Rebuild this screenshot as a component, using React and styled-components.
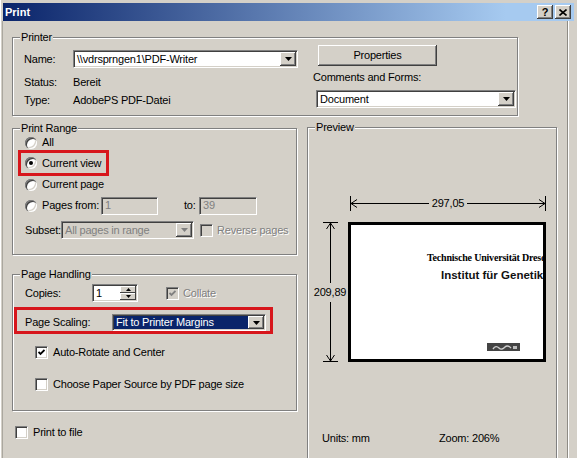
import React from 'react';
import styled, { createGlobalStyle } from 'styled-components';

const FACE = '#d4d0c8';

const GlobalStyle = createGlobalStyle`
  html, body { margin: 0; padding: 0; background: ${FACE}; }
  body {
    font-family: "Liberation Sans", Arial, sans-serif;
    font-size: 11px;
    color: #000;
  }
  * { box-sizing: border-box; }
`;

const Window = styled.div`
  width: 577px;
  height: 458px;
  overflow: hidden;
  background: ${FACE};
  display: flex;
  flex-direction: column;
  padding-top: 3px;
  letter-spacing: -0.2px;
  line-height: 13px;
  border-left: 1px solid #fff;
`;

const TitleBar = styled.div`
  height: 18px;
  margin: 0 3px 0 2px;
  flex: none;
  background: linear-gradient(to right, #0a246a 0%, #a6caf0 88%, #a6caf0 100%);
  display: flex;
  align-items: center;
  gap: 2px;
  padding: 0 3px 0 2px;
`;

const TitleText = styled.span`
  flex: 1;
  color: #fff;
  font-weight: bold;
  font-size: 11px;
  letter-spacing: 0;
`;

const TitleButton = styled.span`
  width: 16px;
  height: 14px;
  background: ${FACE};
  display: grid;
  place-items: center;
  box-shadow: inset -1px -1px 0 #404040, inset 1px 1px 0 #fff, inset -2px -2px 0 #808080;
  font-weight: bold;
  font-size: 11px;
  line-height: 12px;
  letter-spacing: 0;
`;

const Frame = styled.div`
  flex: 1;
  margin: 0 9px 0 1px;
  border-left: 1px solid #aaa79f;
  border-right: 1px solid #8e8b84;
  box-shadow: 1px 0 0 #fff;
  padding: 16px 0 0 9px;
  display: flex;
  flex-direction: column;
  min-height: 0;
`;

const Group = styled.div`
  position: relative;
  flex: none;
  border: 1px solid #808080;
  box-shadow: inset 1px 1px 0 #fff, 1px 1px 0 #fff;
  width: ${p => p.$w}px;
  height: ${p => p.$h}px;
  margin-top: ${p => p.$mt || 0}px;
`;

const Legend = styled.span`
  position: absolute;
  top: -7px;
  left: 7px;
  padding: 0 1px;
  background: ${FACE};
  line-height: 13px;
`;

/* ---------- generic controls ---------- */

const Sunken = styled.div`
  flex: none;
  display: flex;
  align-items: stretch;
  width: ${p => p.$w}px;
  height: ${p => p.$h || 18}px;
  padding: 1px;
  border-top: 1px solid #808080;
  border-left: 1px solid #808080;
  border-right: 1px solid #fff;
  border-bottom: 1px solid #fff;
  box-shadow: inset 1px 1px 0 #404040, inset -1px -1px 0 ${FACE};
  background: ${p => (p.$selected ? '#0a246a' : p.$disabled ? FACE : '#fff')};
`;

const FieldText = styled.span`
  flex: 1;
  display: flex;
  align-items: center;
  padding-left: 2px;
  white-space: nowrap;
  overflow: hidden;
  color: ${p => (p.$selected ? '#fff' : p.$disabled ? '#808080' : '#000')};
`;

const DropButton = styled.span`
  width: 16px;
  flex: none;
  background: ${FACE};
  display: grid;
  place-items: center;
  box-shadow: inset -1px -1px 0 #404040, inset 1px 1px 0 #fff, inset -2px -2px 0 #808080;
`;

const Arrow = ({ color = '#000' }) => (
  <svg width="7" height="4" viewBox="0 0 7 4">
    <polygon points="0,0 7,0 3.5,4" fill={color} />
  </svg>
);

const Combo = ({ w, h, value, selected, disabled }) => (
  <Sunken $w={w} $h={h} $selected={selected} $disabled={disabled}>
    <FieldText $selected={selected} $disabled={disabled}>{value}</FieldText>
    <DropButton>
      <Arrow color={disabled ? '#808080' : '#000'} />
    </DropButton>
  </Sunken>
);

const SpinStack = styled.span`
  width: 16px;
  flex: none;
  display: flex;
  flex-direction: column;
`;

const SpinButton = styled.span`
  flex: 1;
  background: ${FACE};
  display: grid;
  place-items: center;
  box-shadow: inset -1px -1px 0 #404040, inset 1px 1px 0 #fff;
`;

const Spinner = ({ value }) => (
  <Sunken $w={46} $h={18}>
    <FieldText>{value}</FieldText>
    <SpinStack>
      <SpinButton>
        <svg width="5" height="3" viewBox="0 0 5 3"><polygon points="2.5,0 5,3 0,3" fill="#000" /></svg>
      </SpinButton>
      <SpinButton>
        <svg width="5" height="3" viewBox="0 0 5 3"><polygon points="0,0 5,0 2.5,3" fill="#000" /></svg>
      </SpinButton>
    </SpinStack>
  </Sunken>
);

const PushButton = styled.div`
  width: 119px;
  height: 21px;
  margin-left: 5px;
  display: grid;
  place-items: center;
  background: ${FACE};
  box-shadow: inset -1px -1px 0 #404040, inset 1px 1px 0 #fff, inset -2px -2px 0 #808080;
`;

const CheckBox = styled.span`
  width: 13px;
  height: 13px;
  flex: none;
  display: grid;
  place-items: center;
  background: ${p => (p.$disabled ? FACE : '#fff')};
  border-top: 1px solid #808080;
  border-left: 1px solid #808080;
  border-right: 1px solid #fff;
  border-bottom: 1px solid #fff;
  box-shadow: inset 1px 1px 0 #404040, inset -1px -1px 0 ${FACE};
`;

const Check = ({ checked, disabled }) => (
  <CheckBox $disabled={disabled}>
    {checked && (
      <svg width="7" height="7" viewBox="0 0 7 7">
        <polyline points="0.5,3 2.5,5 6.5,1" fill="none" stroke={disabled ? '#808080' : '#000'} strokeWidth="1.8" />
      </svg>
    )}
  </CheckBox>
);

const RadioCircle = styled.span`
  width: 12px;
  height: 12px;
  flex: none;
  border-radius: 50%;
  background: #fff;
  display: grid;
  place-items: center;
  box-shadow: inset 1px 1px 0 #808080, inset 2px 2px 0 #404040, inset -1px -1px 0 #fff, inset -2px -2px 0 ${FACE};
`;

const RadioDot = styled.span`
  width: 4px;
  height: 4px;
  border-radius: 50%;
  background: #000;
`;

const Radio = ({ on }) => <RadioCircle>{on && <RadioDot />}</RadioCircle>;

const Muted = styled.span`
  color: #808080;
  text-shadow: 1px 1px 0 #fff;
  white-space: nowrap;
`;

/* ---------- printer section ---------- */

const PrinterBody = styled.div`
  display: flex;
  padding: 7px 0 0 11px;
`;

const PrinterInfo = styled.div`
  width: 289px;
  display: flex;
  flex-direction: column;
`;

const InfoRow = styled.div`
  display: flex;
  align-items: center;
  height: ${p => p.$h || 13}px;
  margin-top: ${p => p.$mt || 0}px;
`;

const InfoLabel = styled.span`
  width: 49px;
  flex: none;
`;

const PrinterSide = styled.div`
  display: flex;
  flex-direction: column;
`;

const SideLabel = styled.span`
  margin-top: 5px;
  white-space: nowrap;
`;

const ComboSlot = styled.div`
  margin: 6px 0 0 3px;
`;

/* ---------- lower columns ---------- */

const Columns = styled.div`
  display: flex;
  gap: 10px;
  margin-top: 11px;
`;

const LeftColumn = styled.div`
  width: 285px;
  flex: none;
  display: flex;
  flex-direction: column;
`;

const GroupBody = styled.div`
  display: flex;
  flex-direction: column;
  padding: ${p => p.$pt}px 0 0 12px;
`;

const OptionRow = styled.div`
  display: flex;
  align-items: center;
  gap: 5px;
  height: ${p => p.$h || 21}px;
  margin-top: ${p => p.$mt || 0}px;
  padding-left: ${p => p.$indent || 0}px;
  white-space: nowrap;
`;

const ViewHighlight = styled.div`
  width: 91px;
  margin: -3px 0 -2px -7px;
  padding-left: 4px;
  border: 3px solid #d7161c;
`;

const ScalingHighlight = styled.div`
  width: 259px;
  margin: 5px 0 0 -11px;
  padding: 4px 0 0 8px;
  border: 3px solid #d7161c;
`;

const FixedLabel = styled.span`
  width: ${p => p.$w}px;
  flex: none;
  margin-left: ${p => p.$ml || 0}px;
  white-space: nowrap;
`;

const TightRow = styled.div`
  display: flex;
  align-items: center;
  height: ${p => p.$h}px;
  margin-top: ${p => p.$mt || 0}px;
  white-space: nowrap;
`;

const SubsetCheck = styled.span`
  display: flex;
  align-items: center;
  gap: 4px;
  margin-left: ${p => p.$ml}px;
`;

const FileRow = styled.div`
  display: flex;
  align-items: center;
  gap: 5px;
  margin: 15px 0 0 3px;
  height: 13px;
`;

/* ---------- preview ---------- */

const PreviewBody = styled.div`
  display: flex;
  flex-direction: column;
  padding: 68px 0 0 6px;
`;

const HDim = styled.div`
  width: 196px;
  height: 15px;
  margin-left: 36px;
  display: flex;
  align-items: center;
`;

const HLine = styled.span`
  flex: 1;
  height: 1px;
  background: #000;
`;

const DimLabel = styled.span`
  padding: ${p => (p.$vertical ? '3px 0' : '0 3px')};
  white-space: nowrap;
  line-height: 13px;
`;

const PageRow = styled.div`
  display: flex;
  gap: 2px;
  margin-top: 11px;
`;

const VDim = styled.div`
  width: 32px;
  height: 140px;
  display: flex;
  flex-direction: column;
  align-items: center;
`;

const VLine = styled.span`
  flex: 1;
  width: 1px;
  background: #000;
`;

const Sheet = styled.div`
  width: 198px;
  height: 140px;
  border: 3px solid #000;
  background: #fff;
  overflow: hidden;
  display: flex;
  flex-direction: column;
  letter-spacing: 0;
`;

const Letterhead = styled.span`
  margin: 27px 0 0 76px;
  font-family: "Liberation Serif", "Times New Roman", serif;
  font-weight: bold;
  font-size: 10px;
  line-height: 12px;
  white-space: nowrap;
  letter-spacing: -0.2px;
`;

const Institute = styled.span`
  margin: 4px 0 0 90px;
  font-weight: bold;
  font-size: 11.5px;
  line-height: 14px;
  white-space: nowrap;
  color: #111;
`;

const LogoMark = styled.svg`
  margin: 61px 0 0 136px;
  flex: none;
`;

const PreviewFooter = styled.div`
  display: flex;
  margin-top: 70px;
  padding-left: 8px;
`;

const FooterItem = styled.span`
  width: 120px;
  white-space: nowrap;
`;

export default function App() {
  return (
    <>
      <GlobalStyle />
      <Window>
        <TitleBar>
          <TitleText>Print</TitleText>
          <TitleButton>?</TitleButton>
          <TitleButton>
            <svg width="8" height="7" viewBox="0 0 8 7">
              <path d="M0.5 0.5L7.5 6.5M7.5 0.5L0.5 6.5" stroke="#000" strokeWidth="1.6" />
            </svg>
          </TitleButton>
        </TitleBar>

        <Frame>
          <Group $w={506} $h={79}>
            <Legend>Printer</Legend>
            <PrinterBody>
              <PrinterInfo>
                <InfoRow $h={18} $mt={5}>
                  <InfoLabel>Name:</InfoLabel>
                  <Combo w={225} value={'\\\\vdrsprngen1\\PDF-Writer'} />
                </InfoRow>
                <InfoRow $mt={8}>
                  <InfoLabel>Status:</InfoLabel>
                  <span>Bereit</span>
                </InfoRow>
                <InfoRow $mt={5}>
                  <InfoLabel>Type:</InfoLabel>
                  <span>AdobePS PDF-Datei</span>
                </InfoRow>
              </PrinterInfo>
              <PrinterSide>
                <PushButton>Properties</PushButton>
                <SideLabel>Comments and Forms:</SideLabel>
                <ComboSlot>
                  <Combo w={200} value="Document" />
                </ComboSlot>
              </PrinterSide>
            </PrinterBody>
          </Group>

          <Columns>
            <LeftColumn>
              <Group $w={285} $h={127} $mt={1}>
                <Legend>Print Range</Legend>
                <GroupBody $pt={3}>
                  <OptionRow>
                    <Radio />
                    <span>All</span>
                  </OptionRow>
                  <ViewHighlight>
                    <OptionRow $h={20}>
                      <Radio on />
                      <span>Current view</span>
                    </OptionRow>
                  </ViewHighlight>
                  <OptionRow>
                    <Radio />
                    <span>Current page</span>
                  </OptionRow>
                  <TightRow $h={21}>
                    <Radio />
                    <FixedLabel $w={59} $ml={5}>Pages from:</FixedLabel>
                    <Sunken $w={57} $disabled>
                      <FieldText $disabled>1</FieldText>
                    </Sunken>
                    <FixedLabel $w={15} $ml={26}>to:</FixedLabel>
                    <Sunken $w={58} $disabled>
                      <FieldText $disabled>39</FieldText>
                    </Sunken>
                  </TightRow>
                  <TightRow $h={18} $mt={5}>
                    <FixedLabel $w={36}>Subset:</FixedLabel>
                    <Combo w={133} value="All pages in range" disabled />
                    <SubsetCheck $ml={6}>
                      <Check disabled />
                      <Muted>Reverse pages</Muted>
                    </SubsetCheck>
                  </TightRow>
                </GroupBody>
              </Group>

              <Group $w={285} $h={137} $mt={19}>
                <Legend>Page Handling</Legend>
                <GroupBody $pt={9}>
                  <TightRow $h={18}>
                    <FixedLabel $w={67}>Copies:</FixedLabel>
                    <Spinner value="1" />
                    <SubsetCheck $ml={28}>
                      <Check checked disabled />
                      <Muted>Collate</Muted>
                    </SubsetCheck>
                  </TightRow>
                  <ScalingHighlight>
                    <TightRow $h={17}>
                      <FixedLabel $w={87}>Page Scaling:</FixedLabel>
                      <Combo w={154} h={17} value="Fit to Printer Margins" selected />
                    </TightRow>
                  </ScalingHighlight>
                  <OptionRow $h={13} $mt={12} $indent={10}>
                    <Check checked />
                    <span>Auto-Rotate and Center</span>
                  </OptionRow>
                  <OptionRow $h={13} $mt={19} $indent={10}>
                    <Check />
                    <span>Choose Paper Source by PDF page size</span>
                  </OptionRow>
                </GroupBody>
              </Group>

              <FileRow>
                <Check />
                <span>Print to file</span>
              </FileRow>
            </LeftColumn>

            <Group $w={250} $h={360}>
              <Legend>Preview</Legend>
              <PreviewBody>
                <HDim>
                  <svg width="8" height="15" viewBox="0 0 8 15">
                    <path d="M0.5 0V15M7 3.5L1 7.5L7 11.5M1 7.5H8" stroke="#000" fill="none" />
                  </svg>
                  <HLine />
                  <DimLabel>297,05</DimLabel>
                  <HLine />
                  <svg width="8" height="15" viewBox="0 0 8 15">
                    <path d="M7.5 0V15M1 3.5L7 7.5L1 11.5M7 7.5H0" stroke="#000" fill="none" />
                  </svg>
                </HDim>
                <PageRow>
                  <VDim>
                    <svg width="15" height="8" viewBox="0 0 15 8">
                      <path d="M0 0.5H15M3.5 7L7.5 1L11.5 7M7.5 1V8" stroke="#000" fill="none" />
                    </svg>
                    <VLine />
                    <DimLabel $vertical>209,89</DimLabel>
                    <VLine />
                    <svg width="15" height="8" viewBox="0 0 15 8">
                      <path d="M0 7.5H15M3.5 1L7.5 7L11.5 1M7.5 7V0" stroke="#000" fill="none" />
                    </svg>
                  </VDim>
                  <Sheet>
                    <Letterhead>Technische Universität Dresden</Letterhead>
                    <Institute>Institut für Genetik</Institute>
                    <LogoMark width="33" height="8" viewBox="0 0 33 8">
                      <rect width="33" height="8" fill="#444" />
                      <path d="M6 6C8 3 10 3 12 5S16 6 18 4S22 3 24 5" stroke="#cfcfcf" strokeWidth="1.4" fill="none" />
                      <rect x="26" y="3" width="4" height="3" fill="#bdbdbd" />
                    </LogoMark>
                  </Sheet>
                </PageRow>
                <PreviewFooter>
                  <FooterItem>Units: mm</FooterItem>
                  <FooterItem>Zoom: 206%</FooterItem>
                </PreviewFooter>
              </PreviewBody>
            </Group>
          </Columns>
        </Frame>
      </Window>
    </>
  );
}
